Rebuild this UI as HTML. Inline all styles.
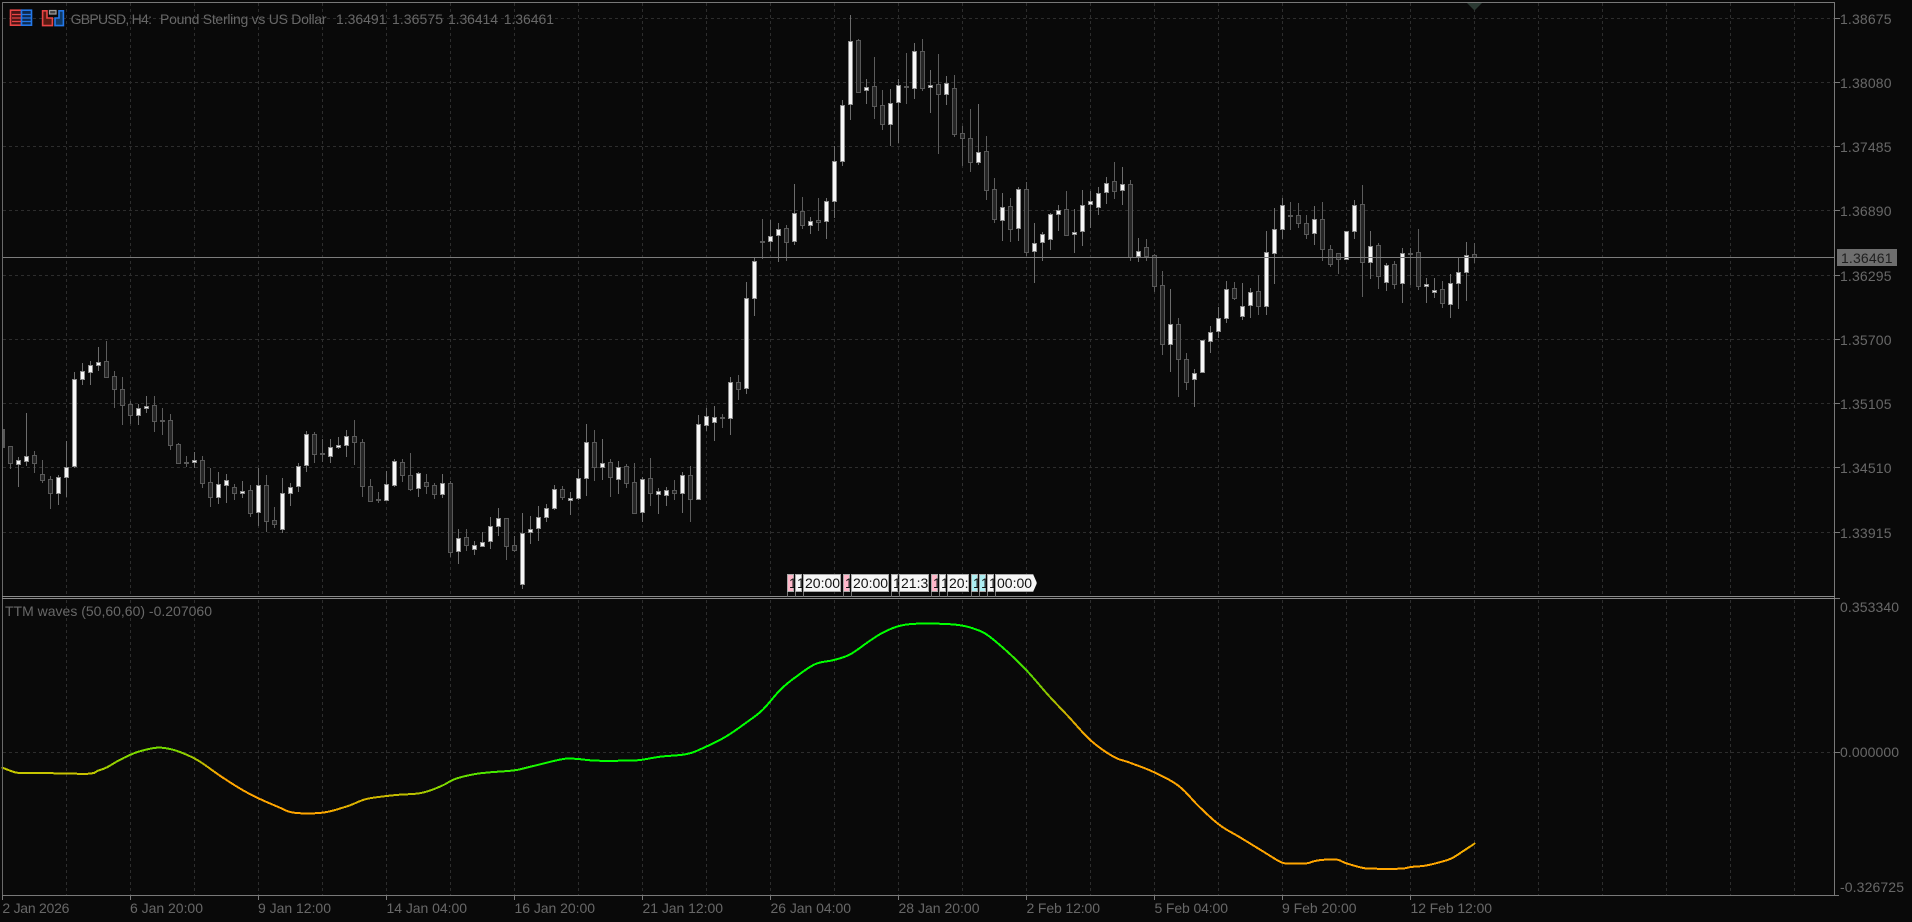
<!DOCTYPE html>
<html><head><meta charset="utf-8"><title>GBPUSD,H4</title>
<style>
html,body{margin:0;padding:0;background:#090909;width:1912px;height:922px;overflow:hidden}
svg{position:absolute;left:0;top:0}
text{font-family:"Liberation Sans",sans-serif;font-size:14px;fill:#686868}
.f{position:absolute;top:574px;height:18px;overflow:hidden;font:14px/19px "Liberation Sans",sans-serif;color:#111;background:#f6f6f6;box-sizing:border-box;padding-left:2px;white-space:nowrap;box-shadow:inset 0 0 0 1px #aaa}
.p{background:#ffb8ca}.c{background:#aeeef2}
.t{position:absolute;top:592px;width:1px;height:5px;background:#777}
</style></head><body>
<svg id="s" width="1912" height="922" viewBox="0 0 1912 922">
<g id="grid" shape-rendering="crispEdges"></g>
<g id="cand" shape-rendering="crispEdges"></g>
<g id="ind" shape-rendering="crispEdges"></g>
<g id="frame" shape-rendering="crispEdges"></g>
<polygon points="1467,3 1482,3 1474.5,10.5" fill="#2b3a33"/>
<!-- icons -->
<g fill="none" stroke-width="1.6">
<rect x="10.5" y="10.2" width="11" height="15" fill="#4a1515" stroke="#e84545"/>
<rect x="21.5" y="10.2" width="10" height="15" fill="#0e2a50" stroke="#2478e8"/>
<path d="M12 14.5H21M12 18H21M12 21.5H21" stroke="#e84545" stroke-width="1.2"/>
<path d="M22 14.5H31M22 18H31M22 21.5H31" stroke="#2478e8" stroke-width="1.2"/>
<path d="M42.6 10.8H47V18H52.4V25.6H42.6Z" fill="#5a1a12" stroke="#e84545"/>
<path d="M63.4 10.8H59V18H55V25.6H63.4Z" fill="#0f3a66" stroke="#2478e8"/>
<rect x="49.5" y="10.5" width="6.5" height="3.5" fill="#444" stroke="#a0a0a0" stroke-width="1.2"/>
</g>
<!-- header -->
<g>
<text x="70.6" y="24" textLength="81.4">GBPUSD, H4:</text>
<text x="160" y="24" textLength="166.5">Pound Sterling vs US Dollar</text>
<text x="336" y="24" textLength="50.5">1.36491</text>
<text x="392" y="24" textLength="51">1.36575</text>
<text x="448" y="24" textLength="50">1.36414</text>
<text x="503.7" y="24" textLength="50.3">1.36461</text>
<text x="5" y="616" textLength="207">TTM waves (50,60,60) -0.207060</text>
</g>
<!-- price axis -->
<g>
<text x="1840" y="24" textLength="51.5">1.38675</text>
<text x="1840" y="88" textLength="51.5">1.38080</text>
<text x="1840" y="152" textLength="51.5">1.37485</text>
<text x="1840" y="216" textLength="51.5">1.36890</text>
<text x="1840" y="281" textLength="51.5">1.36295</text>
<text x="1840" y="345" textLength="51.5">1.35700</text>
<text x="1840" y="409" textLength="51.5">1.35105</text>
<text x="1840" y="473" textLength="51.5">1.34510</text>
<text x="1840" y="538" textLength="51.5">1.33915</text>
<rect x="1837" y="249" width="60" height="17" fill="#6e6e6e"/>
<text x="1841" y="263" textLength="51.5" style="fill:#1e1e1e">1.36461</text>
<text x="1840" y="612" textLength="59">0.353340</text>
<text x="1840" y="757" textLength="59">0.000000</text>
<text x="1840" y="892" textLength="64">-0.326725</text>
</g>
<!-- time axis -->
<g>
<text x="2.4" y="913" textLength="67">2 Jan 2026</text>
<text x="130" y="913" textLength="73">6 Jan 20:00</text>
<text x="258" y="913" textLength="73">9 Jan 12:00</text>
<text x="386.5" y="913" textLength="80.5">14 Jan 04:00</text>
<text x="514.5" y="913" textLength="80.5">16 Jan 20:00</text>
<text x="642.5" y="913" textLength="80.5">21 Jan 12:00</text>
<text x="770.5" y="913" textLength="80.5">26 Jan 04:00</text>
<text x="898.5" y="913" textLength="81">28 Jan 20:00</text>
<text x="1026.5" y="913" textLength="73.5">2 Feb 12:00</text>
<text x="1154.5" y="913" textLength="73.5">5 Feb 04:00</text>
<text x="1282" y="913" textLength="74.5">9 Feb 20:00</text>
<text x="1410.5" y="913" textLength="81.5">12 Feb 12:00</text>
</g>
</svg>
<div class="t" style="left:787px"></div><div class="t" style="left:795px"></div><div class="t" style="left:803px"></div><div class="t" style="left:843px"></div><div class="t" style="left:851px"></div><div class="t" style="left:891px"></div><div class="t" style="left:899px"></div><div class="t" style="left:931px"></div><div class="t" style="left:939px"></div><div class="t" style="left:947px"></div><div class="t" style="left:971px"></div><div class="t" style="left:979px"></div><div class="t" style="left:987px"></div><div class="t" style="left:995px"></div>
<div class="f p" style="left:787px;width:7px">1</div>
<div class="f" style="left:795px;width:7px">1</div>
<div class="f" style="left:803px;width:38px">20:00</div>
<div class="f p" style="left:843px;width:7px">1</div>
<div class="f" style="left:851px;width:38px">20:00</div>
<div class="f" style="left:891px;width:7px">1</div>
<div class="f" style="left:899px;width:30px">21:3</div>
<div class="f p" style="left:931px;width:7px">1</div>
<div class="f" style="left:939px;width:7px">1</div>
<div class="f" style="left:947px;width:22px">20:00</div>
<div class="f c" style="left:971px;width:7px">1</div>
<div class="f c" style="left:979px;width:7px">1</div>
<div class="f" style="left:987px;width:7px">1</div>
<div class="f" style="left:995px;width:42px;clip-path:polygon(0 0,38px 0,42px 50%,38px 100%,0 100%)">00:00</div>
<script>
var NS="http://www.w3.org/2000/svg";
function R(g,x,y,w,h,f){var e=document.createElementNS(NS,"rect");e.setAttribute("x",x);e.setAttribute("y",y);e.setAttribute("width",w);e.setAttribute("height",h);e.setAttribute("fill",f);g.appendChild(e);}
function L(g,a,b,c,d,col,extra){var e=document.createElementNS(NS,"line");e.setAttribute("x1",a);e.setAttribute("y1",b);e.setAttribute("x2",c);e.setAttribute("y2",d);e.setAttribute("stroke",col);for(var k in extra)e.setAttribute(k,extra[k]);g.appendChild(e);}
var G=document.getElementById("grid"),C=document.getElementById("cand"),I=document.getElementById("ind"),F=document.getElementById("frame");
var gc="#2d2d2d",ds={"stroke-dasharray":"3 3"};
[18,82,146,210,275,339,403,467,532].forEach(function(y){L(G,3,y+.5,1834,y+.5,gc,ds);});
L(G,3,752.5,1834,752.5,gc,ds);
for(var i=1;i<=28;i++){var x=2.5+64*i;L(G,x,3,x,596,gc,ds);L(G,x,600,x,895,gc,ds);}

/* k type,H,T,B,L in y*3 coordinates */
var O=960;
function o(a,b,c,d){return [a+O,b+O,c+O,d+O];}
var D=[
"d",o(300,327,380,420),"d",o(378,378,430,448),"b",o(412,421,431,500),"b",o(280,407,422,437),"d",o(393,405,428,460),"d",o(420,463,479,490),
"d",o(468,477,518,566),"b",o(465,472,518,555),"b",o(363,440,472,530),"b",o(155,178,438,445),"b",o(130,154,178,195),"b",o(122,136,157,195),
"b",o(82,125,136,152),"d",o(62,124,170,170),"d",o(153,168,208,265),"d",o(172,208,254,315),"d",o(243,252,284,312),"b",o(253,265,286,315),
"b",o(228,257,265,278),"d",o(228,255,302,335),"d",o(265,301,303,345),"d",o(283,301,374,390),"d",o(368,372,428,430),"d",o(407,427,430,442),
"b",o(397,421,427,445),"d",o(408,421,488,505),"d",o(445,487,532,560),"b",o(457,493,532,553),"b",o(462,481,496,548),"d",o(492,502,518,540),
"b",o(483,512,520,533),"d",o(495,511,578,592),"b",o(445,496,577,617),"d",o(465,496,602,636),"d",o(561,601,613,624),"b",o(475,520,628,640),
"b",o(490,500,520,557),"b",o(430,437,498,515),"b",o(332,343,436,455),"d",o(337,342,401,430),"d",o(358,400,403,425),"b",o(358,382,407,430),
"b",o(350,376,382,387),"b",o(330,347,376,410),"d",o(300,349,365,435),"d",o(357,367,499,530),"d",o(477,499,542,545),"d",o(517,538,541,548),
"b",o(453,493,539,541),"b",o(418,424,494,500),"d",o(418,426,466,487),"d",o(400,466,506,513),"b",o(457,460,505,530),"d",o(462,487,497,522),
"d",o(490,495,522,537),"b",o(462,490,521,535),"d",o(484,490,697,710),"b",o(628,653,694,732),"d",o(628,652,674,692),"b",o(664,676,686,705),
"b",o(637,665,677,680),"b",o(590,619,664,687),"b",o(565,595,619,647),"d",o(595,595,677,720),"d",o(648,676,691,697),"b",o(580,638,793,808),
"b",o(588,626,637,671),"b",o(558,592,625,662),"b",o(553,565,590,605),"b",o(495,508,565,570),"d",o(498,508,530,540),"b",o(517,533,541,585),
"b",o(447,475,533,540),"b",o(312,367,475,528),"d",o(330,367,440,483),"b",o(357,428,440,480),"d",o(418,427,472,530),"b",o(423,440,478,522),
"d",o(432,439,488,505),"d",o(430,487,578,582),
"b",o(470,476,575,605),"d",o(415,475,520,558),"b",o(505,514,521,582),"b",o(502,511,526,558),"d",o(480,511,518,540),"b",o(457,466,518,578),
"d",o(438,466,536,605),"b",o(285,313,537,540),"b",o(264,287,314,333),"b",o(258,292,307,362),"d",o(283,291,293,323),"b",o(172,187,293,345),
"d",o(165,187,207,240),
"b",[847,895,1165,1182],"b",[772,784,895,947],"d",[657,723,725,778],"b",[660,707,724,752],"b",[670,688,706,785],"d",[675,685,725,783],
"b",[553,638,724,735],"d",[590,634,674,686],"b",[652,664,674,702],"d",[595,661,667,693],"b",[595,602,664,716],"b",[438,482,604,655],
"b",[300,314,482,497],"b",[45,124,313,360],"d",[118,121,275,279],"b",[237,260,271,312],"d",[172,259,317,357],"d",[270,316,371,389],
"b",[266,308,371,439],"b",[238,256,307,430],"d",[158,257,262,312],"b",[128,152,265,297],"d",[117,152,263,272],"b",[210,254,262,338],
"d",[162,253,281,461],"b",[228,248,283,315],"d",[225,265,401,410],"d",[378,400,415,498],"d",[328,415,487,515],"b",[313,455,487,494],
"d",[408,454,569,600],"d",[534,568,656,668],"b",[580,620,661,722],"d",[595,619,686,726],"b",[562,568,685,722],"d",[547,568,755,768],
"b",[670,728,754,848],"b",[695,701,727,782],"b",[640,643,718,750],"b",[615,629,643,693],"d",[573,628,706,708],"b",[628,695,703,758],
"b",[571,614,694,738],"b",[573,604,613,684],"b",[561,578,622,644],"b",[531,548,577,612],"d",[486,544,572,597],"b",[502,553,571,615],
"d",[540,553,770,782],"b",[714,754,769,785],"d",[717,740,767,782],"d",[763,766,857,875],"d",[814,856,1033,1065],"b",[868,973,1033,1115],
"d",[955,973,1078,1190],"d",[1060,1078,1147,1170],"b",[1108,1118,1136,1220],"b",[1020,1020,1117,1118],"b",[978,995,1022,1058],"b",[920,955,993,1015],
"b",[843,866,955,970],"d",[847,865,893,899],"b",[850,917,949,960],"b",[865,875,916,955],"d",[825,874,917,945],"b",[693,757,917,945],"b",[625,688,758,851],
"b",[595,616,688,717],"d",[605,644,647,690],"d",[609,646,668,684],"d",[645,670,701,717],"b",[618,656,700,735],"d",[605,658,748,783],
"d",[735,748,791,802],"d",[758,760,778,822],"b",[694,694,778,780],"b",[600,614,694,717],"d",[555,613,787,890],"b",[693,737,787,837],
"d",[728,735,829,867],"b",[790,794,847,873],"d",[782,793,853,867],"b",[744,760,850,908],"d",[745,759,761,855],"d",[687,757,859,870],
"b",[835,851,857,908],"b",[833,869,875,893],"d",[843,867,910,923],"b",[823,848,913,955],"b",[773,817,850,927],"b",[727,764,817,903],"d",[730,763,771,788]
];
for(var n=0;n<D.length/2;n++){
 var t=D[2*n],v=D[2*n+1],x=8*n,
 H=Math.round(v[0]/3),T=Math.round(v[1]/3),B=Math.round(v[2]/3),Lo=Math.round(v[3]/3);
 if(B<=T)B=T+1;
 var wc=t=="b"?"#6c6c6c":"#5c5c5c";
 if(n>0)R(C,x+2,H,1,Lo-H,wc);
 var bx=n==0?3:x,bw=n==0?2:5;
 R(C,bx,T,bw,B-T+1,t=="b"?"#8c8c8c":"#585858");
 if(B-T>1&&n>0)R(C,x+1,T+1,3,B-T-1,t=="b"?"#f6f6f6":"#262626");
 else if(t=="b"&&n>0)R(C,x+1,T,3,B-T+1,"#e8e8e8");
}
/* indicator */
var P=[];
function add(off,a){for(var i=0;i<a.length;i+=2)P.push([off+a[i]/2.45,600+a[i+1]/3]);}
add(0,[6,503,25,512,47,519,100,519,143,520,220,521,240,512,262,502,290,482,320,464,345,453,385,443,420,448,455,463,490,485,540,528,590,567,630,593,680,620,720,638,790,638,850,619,885,602,910,594,970,585,1020,581,1050,573,1085,556,1115,537,1160,523,1200,517,1260,511,1300,500,1380,477,1415,477,1460,482,1530,482]);
add(640,[0,480,50,470,115,462,160,441,210,410,260,368,300,330,345,268,385,228,430,192,475,180,515,163,560,125,595,98,635,78,680,71,750,72,790,77,820,87,850,104,900,155,950,215,1000,285,1050,350,1105,422,1160,470,1200,488,1260,517,1320,558,1370,620,1420,675,1470,712,1530,757]);
add(1272,[0,771,25,788,50,791,85,790,105,783,130,779,160,779,180,789,220,803,245,806,315,806,340,801,375,797,410,787,440,775,470,752,496,731]);
var S=[[2,196,200,0],[90,200,192,0],[98,176,200,0],[130,128,216,0],[171,112,216,0],[200,176,192,0],[220,255,165,0],[322,255,165,0],[347,224,176,0],[416,184,192,0],[443,128,216,0],[514,48,240,0],[563,0,255,0],[995,0,255,0],[1028,80,216,0],[1068,208,176,0],[1091,255,165,0],[1440,255,165,0],[1474,240,176,0]];
function col(x){for(var i=0;i<S.length-1;i++){if(x<=S[i+1][0]){var a=S[i],b=S[i+1],f=Math.max(0,(x-a[0])/(b[0]-a[0]));return "rgb("+[1,2,3].map(function(j){return Math.round(a[j]+(b[j]-a[j])*f);}).join(",")+")";}}return "rgb(240,176,0)";}
/* Catmull-Rom smoothing */
var Q=[];
for(var i=0;i<P.length-1;i++){
 var p0=P[Math.max(0,i-1)],p1=P[i],p2=P[i+1],p3=P[Math.min(P.length-1,i+2)];
 var steps=Math.max(1,Math.ceil((p2[0]-p1[0])/3));
 for(var j=0;j<steps;j++){var u=j/steps,u2=u*u,u3=u2*u;
  Q.push([0,1].map(function(m){return 0.5*(2*p1[m]+(p2[m]-p0[m])*u+(2*p0[m]-5*p1[m]+4*p2[m]-p3[m])*u2+(3*p1[m]-p0[m]-3*p2[m]+p3[m])*u3);}));}
}
Q.push(P[P.length-1]);
for(var i=0;i<Q.length-1;i++){var a=Q[i],b=Q[i+1];L(I,a[0],a[1],b[0],b[1],col((a[0]+b[0])/2),{"stroke-width":"2","stroke-linecap":"round"});}
/* frame */
var fc="#787878";
R(F,2,2,1833,1,fc);R(F,2,2,1,894,"#6a6a6a");R(F,1834,2,1,894,fc);R(F,2,895,1833,1,fc);
R(F,2,596,1833,1,"#8a8a8a");R(F,2,598,1833,1,"#8a8a8a");
[18,82,146,210,275,339,403,467,532,752].forEach(function(y){R(F,1835,y,5,1,fc);});
R(F,1835,598,5,1,fc);R(F,1835,895,4,1,fc);
for(var i=0;i<=11;i++)R(F,2+128*i,896,1,4,fc);
R(F,3,257,1831,1,"#7c7c7c");
</script>
</body></html>
